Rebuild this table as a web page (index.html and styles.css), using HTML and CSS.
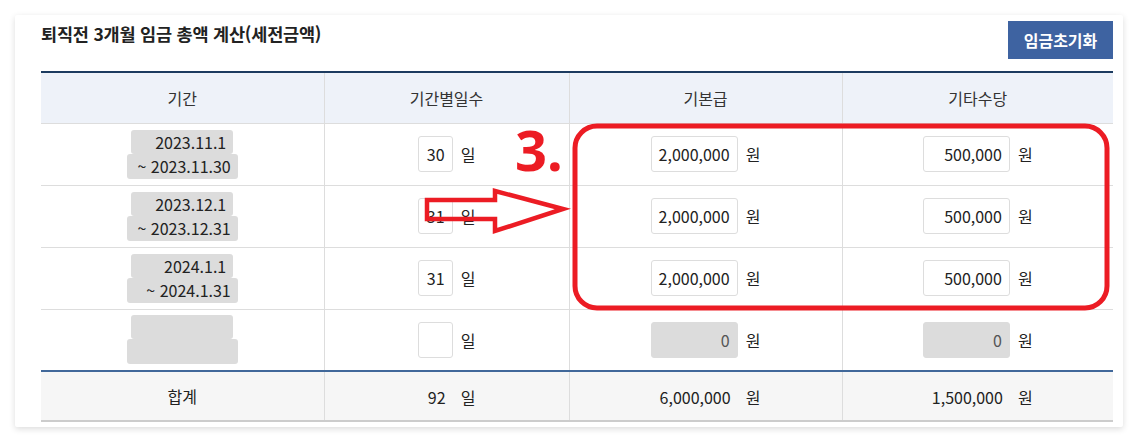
FILE: index.html
```html
<!DOCTYPE html>
<html lang="ko">
	<head>
		<meta charset="utf-8" />
		<title>퇴직금 계산</title>
		<link rel="stylesheet" href="styles.css">
	</head>
	<body>
		<section class="card">
			<div class="card-head">
				<h2>퇴직전 3개월 임금 총액 계산(세전금액)</h2>
				<button class="reset">임금초기화</button>
			</div>
			<table class="calc">
				<colgroup>
					<col class="c-period" />
					<col class="c-days" />
					<col class="c-base" />
					<col class="c-extra" />
				</colgroup>
				<thead>
					<tr>
						<th>기간</th>
						<th>기간별일수</th>
						<th>기본급</th>
						<th>기타수당</th>
					</tr>
				</thead>
				<tbody>
					<tr>
						<td>
							<div class="period">
								<span class="from">2023.11.1</span>
								<span class="to">~ 2023.11.30</span>
							</div>
						</td>
						<td><div class="field"><input class="days" value="30" /><span>일</span></div></td>
						<td><div class="field"><input class="money" value="2,000,000" /><span>원</span></div></td>
						<td><div class="field"><input class="money" value="500,000" /><span>원</span></div></td>
					</tr>
					<tr>
						<td>
							<div class="period">
								<span class="from">2023.12.1</span>
								<span class="to">~ 2023.12.31</span>
							</div>
						</td>
						<td><div class="field"><input class="days" value="31" /><span>일</span></div></td>
						<td><div class="field"><input class="money" value="2,000,000" /><span>원</span></div></td>
						<td><div class="field"><input class="money" value="500,000" /><span>원</span></div></td>
					</tr>
					<tr>
						<td>
							<div class="period">
								<span class="from">2024.1.1</span>
								<span class="to">~ 2024.1.31</span>
							</div>
						</td>
						<td><div class="field"><input class="days" value="31" /><span>일</span></div></td>
						<td><div class="field"><input class="money" value="2,000,000" /><span>원</span></div></td>
						<td><div class="field"><input class="money" value="500,000" /><span>원</span></div></td>
					</tr>
					<tr>
						<td>
							<div class="period">
								<span class="from">&nbsp;</span>
								<span class="to">&nbsp;</span>
							</div>
						</td>
						<td><div class="field"><input class="days" value="" /><span>일</span></div></td>
						<td><div class="field"><input class="money off" value="0" readonly /><span>원</span></div></td>
						<td><div class="field"><input class="money off" value="0" readonly /><span>원</span></div></td>
					</tr>
				</tbody>
				<tfoot>
					<tr>
						<td>합계</td>
						<td><div class="field"><span class="sum days">92</span><span>일</span></div></td>
						<td><div class="field"><span class="sum money">6,000,000</span><span>원</span></div></td>
						<td><div class="field"><span class="sum money">1,500,000</span><span>원</span></div></td>
					</tr>
				</tfoot>
			</table>
		</section>

		<!-- annotation layer drawn over the table -->
		<div class="marks">
			<div class="step">3.</div>
			<svg width="1138" height="442" viewBox="0 0 1138 442">
				<rect x="575" y="126" width="532" height="182" rx="22" fill="none" stroke="#ec1c24" stroke-width="5" />
				<polygon points="427,200 495,200 495,191 563,209 495,231 495,219 427,219" fill="none" stroke="#ec1c24" stroke-width="4.5" stroke-linejoin="miter" />
			</svg>
		</div>
	</body>
</html>
```

FILE: styles.css
```css
* {
	box-sizing: border-box;
}

body {
	background: #ffffff;
	color: #222222;
	font-family: "Noto Sans CJK KR", "Noto Sans", sans-serif;
	font-size: 16px;
	margin: 0;
	padding: 15px;
}

.card {
	background: #ffffff;
	border-radius: 2px;
	box-shadow: 0 2px 6px rgba(0, 0, 0, 0.14);
	height: 412px;
	padding: 6px 10px 5px 26px;
	width: 1108px;
}

.card-head {
	align-items: flex-start;
	display: flex;
	justify-content: space-between;
	margin-bottom: 12px;
}

.card-head h2 {
	font-size: 17.5px;
	font-weight: bold;
	letter-spacing: -0.2px;
	line-height: 24px;
	margin: 1px 0 0 0;
}

.reset {
	background: #3e63a1;
	border: 0;
	color: #ffffff;
	font-family: inherit;
	font-size: 16px;
	font-weight: bold;
	height: 38px;
	padding: 0;
	width: 105px;
}

.calc {
	border-collapse: collapse;
	table-layout: fixed;
	width: 1072px;
}

.c-period {
	width: 283px;
}

.c-days {
	width: 245px;
}

.c-base {
	width: 273px;
}

.c-extra {
	width: 271px;
}

.calc th,
.calc td {
	border: 1px solid #dddddd;
	padding: 0;
	text-align: center;
}

.calc tr > :first-child {
	border-left: 0;
}

.calc tr > :last-child {
	border-right: 0;
}

.calc thead th {
	background: #eef2f9;
	border-top: 2px solid #1c3b60;
	color: #333333;
	font-weight: normal;
	height: 51px;
}

.calc tbody td {
	height: 62px;
}

.calc tfoot td {
	background: #f6f6f6;
	border-bottom: 2px solid #cccccc;
	border-top: 2px solid #41689a;
	height: 50px;
}

.period {
	align-items: center;
	display: inline-flex;
	flex-direction: column;
	line-height: 24px;
	vertical-align: middle;
}

.period span {
	background: #dcdcdc;
	border-radius: 3px;
	padding-right: 7px;
	text-align: right;
}

.period .from {
	width: 102px;
}

.period .to {
	height: 25px;
	width: 111px;
}

.field {
	align-items: center;
	display: inline-flex;
	gap: 8px;
	vertical-align: middle;
}

.field input {
	background: #ffffff;
	border: 1px solid #dddddd;
	border-radius: 3px;
	color: #222222;
	font-family: inherit;
	font-size: 16px;
	height: 36px;
	padding: 0 7px 0 2px;
	text-align: right;
}

.field input.off {
	background: #dcdcdc;
	border-color: #dcdcdc;
	color: #555555;
}

.days {
	width: 35px;
}

.money {
	width: 87px;
}

.sum {
	display: inline-block;
	padding-right: 7px;
	text-align: right;
}

.marks {
	height: 442px;
	left: 0;
	pointer-events: none;
	position: absolute;
	top: 0;
	width: 1138px;
}

.marks svg {
	display: block;
}

.step {
	color: #ec1c24;
	font-family: "Noto Sans", sans-serif;
	font-size: 56px;
	font-weight: bold;
	left: 515px;
	line-height: 1;
	position: absolute;
	top: 121px;
}
```
